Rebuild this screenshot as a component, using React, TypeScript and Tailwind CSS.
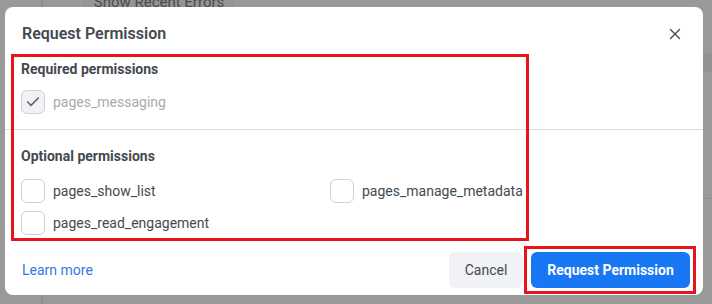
import { Check, X } from 'lucide-react'

function Box({ checked, disabled }: { checked?: boolean; disabled?: boolean }) {
  return (
    <span
      className={`w-6 h-6 shrink-0 rounded-md border flex items-center justify-center ${
        disabled ? 'bg-[#f0f2f5] border-[#ced0d4]' : 'bg-white border-[#ced0d4]'
      }`}
    >
      {checked && <Check className="w-4 h-4 text-[#65676b]" strokeWidth={2.5} />}
    </span>
  )
}

function Perm({ name, checked, disabled }: { name: string; checked?: boolean; disabled?: boolean }) {
  return (
    <label className="flex items-center gap-[8px] h-6">
      <Box checked={checked} disabled={disabled} />
      <span className={`text-[14px] ${disabled ? 'text-[#a8abaf]' : 'text-[#444950]'}`}>{name}</span>
    </label>
  )
}

export default function App() {
  return (
    <div className="relative w-[712px] h-[304px] overflow-hidden bg-[#999999] font-['Roboto',sans-serif]">
      {/* page behind the dialog, dimmed */}
      <div className="flex h-full">
        <div className="w-[43px] shrink-0 border-r-2 border-[#8c8c8c]" />
        <div className="flex-1 flex flex-col">
          <div className="flex h-[55px] border-b border-[#8e8e8e]">
            <div className="ml-[40px] w-[152px] h-[14px] -mt-[5px] bg-[#949494] rounded flex items-center justify-center whitespace-nowrap text-[15px] leading-none text-[#4c4c4c]">
              Show Recent Errors
            </div>
          </div>
          <div className="h-[17px] bg-[#929292] border-b border-[#8e8e8e]" />
          <div className="h-[127px] border-b border-[#8e8e8e]" />
        </div>
      </div>

      {/* dialog */}
      <div className="absolute left-[5px] top-[7px] w-[698px] h-[288px] bg-white rounded-lg flex flex-col text-[#444950]">
        <div className="flex items-center justify-between h-[52px] px-[17px] pt-[1px]">
          <h2 className="text-[16px] font-semibold text-[#444950]">Request Permission</h2>
          <X className="w-[18px] h-[18px] text-[#444950] mr-[2px]" strokeWidth={1.8} />
        </div>

        <div className="px-[16px] pt-[1px] pb-[15px] flex flex-col gap-[12px]">
          <div className="text-[14px] font-bold leading-[18px]">Required permissions</div>
          <Perm name="pages_messaging" checked disabled />
        </div>
        <div className="h-px bg-[#dadde1]" />

        <div className="px-[16px] pt-[17px] flex flex-col gap-[14px]">
          <div className="text-[14px] font-bold leading-[18px]">Optional permissions</div>
          <div className="grid grid-cols-[309px_1fr] gap-y-[8px]">
            <Perm name="pages_show_list" />
            <Perm name="pages_manage_metadata" />
            <Perm name="pages_read_engagement" />
          </div>
        </div>

        <div className="mt-auto flex items-center justify-between pl-[17px] pr-[13px] pb-[7px]">
          <a className="text-[14px] text-[#3578e5]">Learn more</a>
          <div className="flex gap-[8px]">
            <button className="h-[36px] w-[74px] rounded-md bg-[#f0f2f5] text-[14px] text-[#444950]">Cancel</button>
            <button className="h-[36px] w-[159px] rounded-md bg-[#1877f2] text-[14px] font-bold text-white">
              Request Permission
            </button>
          </div>
        </div>
      </div>

      {/* annotation boxes */}
      <div className="absolute left-[11px] top-[54px] w-[518px] h-[187px] border-[3px] border-[#e8141c]" />
      <div className="absolute left-[524px] top-[246px] w-[172px] h-[48px] border-[3px] border-[#e8141c]" />
    </div>
  )
}
